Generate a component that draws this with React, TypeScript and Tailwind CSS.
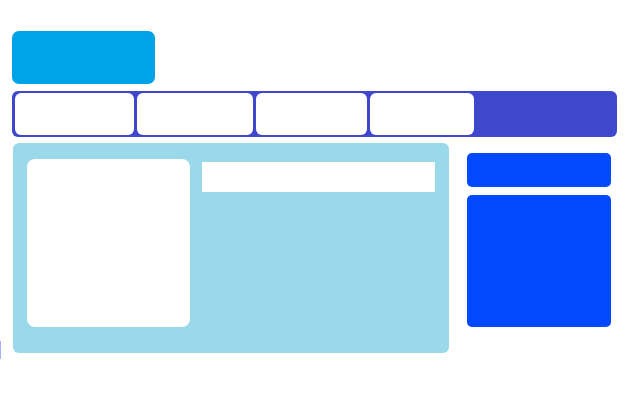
export default function App() {
  const tabs = ['w-[119px]', 'w-[116px]', 'w-[111px]', 'w-[104px]']

  return (
    <div className="relative min-h-[414px] w-[640px] bg-white pl-[12px] pt-[31px]">
      {/* Logo block */}
      <div className="h-[53px] w-[143px] rounded-[7px] bg-[#00a2e8]" />

      {/* Nav bar */}
      <div className="mt-[7px] flex h-[46px] w-[605px] gap-[3px] rounded-[6px] bg-[#3f48cc] px-[3px] py-[2px]">
        {tabs.map((w, i) => (
          <div key={i} className={`${w} h-[42px] rounded-[6px] bg-white`} />
        ))}
      </div>

      {/* Content row */}
      <div className="mt-[6px] flex items-start gap-[18px]">
        <div className="ml-px flex h-[210px] w-[436px] items-start gap-[12px] rounded-[6px] bg-[#99d9ea] pl-[14px] pt-[16px]">
          <div className="h-[168px] w-[163px] rounded-[8px] bg-white" />
          <div className="mt-[3px] h-[30px] w-[233px] bg-white" />
        </div>

        <div className="mt-[10px] flex w-[144px] flex-col gap-[8px]">
          <div className="h-[34px] rounded-[5px] bg-[#0049ff]" />
          <div className="h-[132px] rounded-[5px] bg-[#0049ff]" />
        </div>
      </div>

      {/* sliver of an element sitting just off the left edge */}
      <div className="absolute left-0 top-[341px] h-[18px] w-px bg-[#a3b1ff]" />
    </div>
  )
}
